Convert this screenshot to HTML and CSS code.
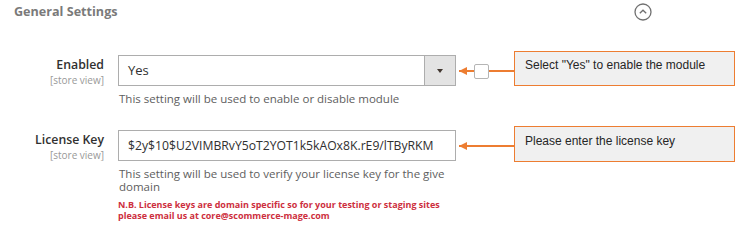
FILE: index.html
```html
<!DOCTYPE html>
<html lang="en">
<head>
  <meta charset="UTF-8" />
  <title>General Settings</title>
  <link rel="stylesheet" href="styles.css">
</head>
<body>

  <div class="section-head">
    <h2 class="section-title">General Settings</h2>
    <svg class="collapse-icon" width="18" height="18" viewBox="0 0 18 18">
      <circle cx="9" cy="9" r="8" fill="none" stroke="#707070" stroke-width="1.3" />
      <path d="M5.8 10.3 L9 7.2 L12.2 10.3" fill="none" stroke="#707070" stroke-width="1.3" />
    </svg>
  </div>

  <div class="field-row">
    <div class="field-label">
      <span class="label-text">Enabled</span>
      <span class="scope">[store view]</span>
    </div>
    <div class="field-control">
      <div class="select-box">
        <span class="select-value">Yes</span>
        <span class="select-btn"><span class="caret"></span></span>
      </div>
      <p class="note">This setting will be used to enable or disable module</p>
    </div>
    <div class="pointer">
      <span class="arrow-line"></span>
      <span class="use-default"></span>
    </div>
    <div class="callout">Select "Yes" to enable the module</div>
  </div>

  <div class="field-row">
    <div class="field-label">
      <span class="label-text">License Key</span>
      <span class="scope">[store view]</span>
    </div>
    <div class="field-control">
      <input class="text-input" type="text" value="$2y$10$U2VIMBRvY5oT2YOT1k5kAOx8K.rE9/lTByRKM" />
      <p class="note">This setting will be used to verify your license key for the give domain</p>
      <p class="warning">N.B. License keys are domain specific so for your testing or staging sites please email us at core@scommerce-mage.com</p>
    </div>
    <div class="pointer">
      <span class="arrow-line"></span>
    </div>
    <div class="callout callout-low">Please enter the license key</div>
  </div>

</body>
</html>
```

FILE: styles.css
```css
body {
  margin: 0;
  font-family: 'Open Sans', sans-serif;
  background: #fff;
  color: #303030;
  width: 750px;
}
.section-head {
  display: flex;
  align-items: flex-start;
  justify-content: space-between;
  width: 652px;
  padding: 2px 0 0 14px;
  box-sizing: border-box;
}
.section-title {
  margin: 0;
  font-size: 12.6px;
  line-height: 20px;
  font-weight: 700;
  color: #7a7a7a;
}
.collapse-icon {
  display: block;
  margin-top: 1px;
}
.field-row {
  display: grid;
  grid-template-columns: 118px 338px 58px 221px;
  align-items: start;
  margin-top: 29px;
}
.field-row + .field-row {
  margin-top: 21px;
}
.field-label {
  display: flex;
  flex-direction: column;
  align-items: flex-end;
  padding: 5px 14px 0 0;
}
.label-text {
  font-size: 12.3px;
  line-height: 18px;
  font-weight: 600;
  color: #303030;
}
.scope {
  font-size: 10px;
  line-height: 12px;
  color: #999;
}
.field-control {
  margin-top: 4px;
}
.select-box {
  display: flex;
  height: 31px;
  border: 1px solid #adadad;
  box-sizing: border-box;
}
.select-value {
  flex: 1;
  padding-left: 9px;
  font-size: 13px;
  line-height: 29px;
}
.select-btn {
  width: 30px;
  background: #e3e3e3;
  border-left: 1px solid #adadad;
  display: flex;
  align-items: center;
  justify-content: center;
}
.caret {
  width: 0;
  height: 0;
  border-left: 3.5px solid transparent;
  border-right: 3.5px solid transparent;
  border-top: 4px solid #41362f;
}
.text-input {
  display: block;
  width: 100%;
  height: 31px;
  margin: 0;
  padding: 0 8px 0 9px;
  border: 1px solid #adadad;
  box-sizing: border-box;
  font-family: 'Open Sans', sans-serif;
  font-size: 12.2px;
  color: #303030;
  outline: none;
}
.note {
  margin: 6px 0 0 1px;
  font-size: 11.5px;
  line-height: 13px;
  color: #5e5e5e;
}
.warning {
  margin: 7px 0 0 0;
  font-size: 9px;
  line-height: 10.5px;
  font-weight: 700;
  color: #cd2f3e;
}
.pointer {
  position: relative;
  height: 39px;
}
.arrow-line {
  position: absolute;
  left: 3px;
  right: 0;
  top: 19px;
  height: 2px;
  background: #ed7d31;
}
.arrow-line::before {
  content: "";
  position: absolute;
  left: 0;
  top: -3px;
  border-top: 4px solid transparent;
  border-bottom: 4px solid transparent;
  border-right: 8px solid #ed7d31;
}
.use-default {
  position: absolute;
  left: 18px;
  top: 13px;
  width: 15px;
  height: 15px;
  border: 1px solid #b5b5b5;
  border-radius: 2px;
  background: #fff;
  box-sizing: border-box;
}
.callout {
  height: 35px;
  padding: 6px 10px 0 10px;
  box-sizing: border-box;
  background: #f0f0f0;
  border: 1.5px solid #ed7d31;
  font-family: 'Liberation Sans', Arial, sans-serif;
  font-size: 12px;
  line-height: 14px;
  color: #262626;
}
.callout-low {
  height: 36px;
  padding-top: 7px;
}
```
